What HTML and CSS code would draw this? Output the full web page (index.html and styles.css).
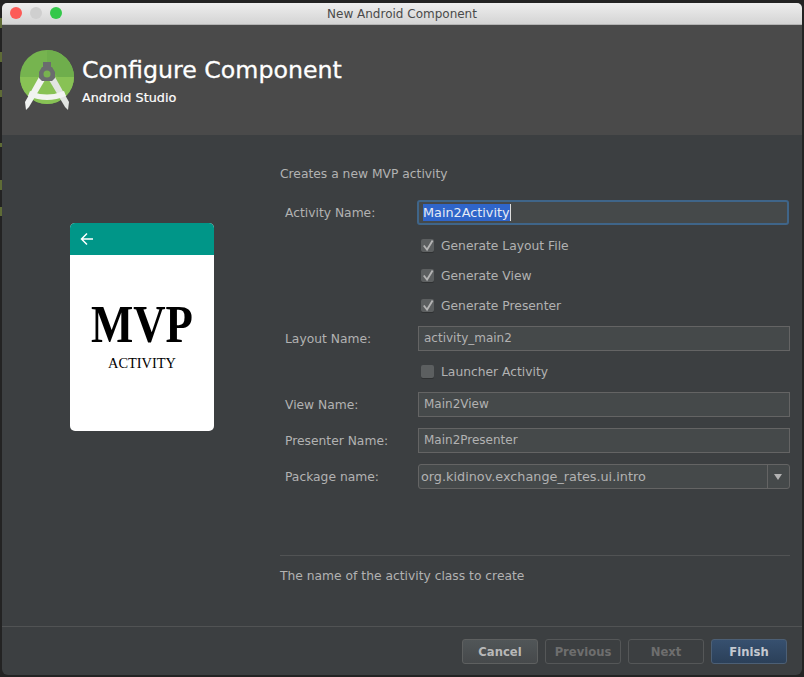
FILE: index.html
```html
<!DOCTYPE html>
<html>
<head>
  <title>New Android Component</title>
  <link rel="stylesheet" href="styles.css">
</head>
<body>
  <div class="window">
    <div class="titlebar">
      <div class="lights">
        <span class="light red"></span>
        <span class="light gray"></span>
        <span class="light green"></span>
      </div>
      <div class="window-title">New Android Component</div>
    </div>

    <div class="header">
      <svg class="logo" width="60" height="64" viewBox="0 0 60 64">
        <circle cx="29" cy="27" r="27" fill="#76b44f"/>
        <path d="M2 27a27 27 0 0 0 54 0z" fill="#88c255"/>
        <path d="M29 0a27 27 0 0 1 27 27H40L29 14z" fill="#6fae4c"/>
        <path d="M21 27l6 3-16 27-3 3-1-8z" fill="#f1f3f1"/>
        <path d="M37 27l-6 3 16 27 3 3 1-8z" fill="#e2e5e2"/>
        <path d="M12 41q17 7 34 0l2 5q-19 8-38 0z" fill="#f1f3f1"/>
        <path d="M25 12h8v5h1l3 5v6l-3 3h-10l-3-3v-6l3-5h1z" fill="#6a6c6e"/>
        <circle cx="29" cy="24" r="3.500" fill="#78b24f"/>
      </svg>
      <div class="header-text">
        <h1>Configure Component</h1>
        <div class="subtitle">Android Studio</div>
      </div>
    </div>

    <div class="content">
      <div class="preview">
        <div class="card">
          <div class="card-bar">
            <svg width="14" height="14" viewBox="0 0 14 14">
              <path d="M13 7H2M7 1.500 1.500 7 7 12.500" fill="none" stroke="#fff" stroke-width="1.500"/>
            </svg>
          </div>
          <div class="card-body">
            <div class="card-big">MVP</div>
            <div class="card-small">ACTIVITY</div>
          </div>
        </div>
      </div>

      <div class="main">
        <p class="intro">Creates a new MVP activity</p>

        <div class="form">
          <label class="label">Activity Name:</label>
          <div class="field focused"><span class="selected">Main2Activity</span></div>

          <div class="check"><span class="box"><svg width="14" height="14" viewBox="0 0 14 14"><path d="M3 6.500 6.500 11 12.500 1" fill="none" stroke="#b4b4b4" stroke-width="2"/></svg></span>Generate Layout File</div>
          <div class="check"><span class="box"><svg width="14" height="14" viewBox="0 0 14 14"><path d="M3 6.500 6.500 11 12.500 1" fill="none" stroke="#b4b4b4" stroke-width="2"/></svg></span>Generate View</div>
          <div class="check"><span class="box"><svg width="14" height="14" viewBox="0 0 14 14"><path d="M3 6.500 6.500 11 12.500 1" fill="none" stroke="#b4b4b4" stroke-width="2"/></svg></span>Generate Presenter</div>

          <label class="label">Layout Name:</label>
          <div class="field">activity_main2</div>

          <div class="check"><span class="box"></span>Launcher Activity</div>

          <label class="label">View Name:</label>
          <div class="field">Main2View</div>

          <label class="label">Presenter Name:</label>
          <div class="field">Main2Presenter</div>

          <label class="label">Package name:</label>
          <div class="combo">
            <span class="combo-text">org.kidinov.exchange_rates.ui.intro</span>
            <span class="combo-arrow"></span>
          </div>
        </div>

        <div class="help">The name of the activity class to create</div>
      </div>
    </div>

    <div class="footer">
      <button class="btn cancel">Cancel</button>
      <button class="btn off">Previous</button>
      <button class="btn off">Next</button>
      <button class="btn finish">Finish</button>
    </div>
  </div>
</body>
</html>
```

FILE: styles.css
```css
html, body {
  margin: 0;
  padding: 0;
  height: 677px;
  overflow: hidden;
  font-family: "DejaVu Sans", sans-serif;
  font-size: 12.3px;
  color: #b2b2b2;
}

/* editor behind the dialog: only the olive code marks show on the left edge */
body {
  background-color: #232323;
  background-image:
    linear-gradient(#5f6c36, #5f6c36),
    linear-gradient(#5f6c36, #5f6c36),
    linear-gradient(#5f6c36, #5f6c36),
    linear-gradient(#5f6c36, #5f6c36),
    linear-gradient(#5f6c36, #5f6c36),
    linear-gradient(#5f6c36, #5f6c36);
  background-repeat: no-repeat;
  background-position: 0 18px, 0 52px, 0 90px, 0 143px, 0 180px, 0 207px;
  background-size: 2px 10px, 2px 10px, 2px 7px, 2px 4px, 2px 10px, 2px 9px;
}

.window {
  margin: 3px 2px 0 2px;
  width: 800px;
  height: 672px;
  display: flex;
  flex-direction: column;
  background-color: #3c3f41;
  border-radius: 5px 5px 6px 6px;
  overflow: hidden;
}

.titlebar {
  position: relative;
  height: 21px;
  flex: none;
  display: flex;
  align-items: center;
  justify-content: center;
  background: linear-gradient(#eeeeee, #d4d4d4);
  border-bottom: 1px solid #b4b4b4;
}

.lights {
  position: absolute;
  left: 8px;
  top: 4px;
  display: flex;
  gap: 8px;
}

.light {
  width: 12px;
  height: 12px;
  border-radius: 50%;
}

.red { background-color: #fc5b57; }
.gray { background-color: #cfcfcf; }
.green { background-color: #34c84a; }

.window-title {
  font-size: 12px;
  color: #4a4a4a;
}

.header {
  height: 110px;
  flex: none;
  display: flex;
  background-color: #4a4a4a;
  padding-left: 16px;
  box-sizing: border-box;
}

.logo {
  margin-top: 25px;
}

.header-text {
  margin-left: 4px;
  color: #ffffff;
}

.header-text h1 {
  margin: 28px 0 0 0;
  font-size: 23.7px;
  font-weight: normal;
  line-height: 34px;
  -webkit-text-stroke: 0.3px #ffffff;
}

.subtitle {
  font-size: 12.8px;
  line-height: 18px;
  margin-top: 2px;
  -webkit-text-stroke: 0.2px #ffffff;
}

.content {
  flex: 1;
  display: flex;
  min-height: 0;
}

.preview {
  width: 278px;
  flex: none;
  padding: 88px 0 0 68px;
  box-sizing: border-box;
}

.card {
  width: 144px;
  height: 208px;
  background-color: #ffffff;
  border-radius: 5px;
  overflow: hidden;
}

.card-bar {
  height: 32px;
  background-color: #009688;
  display: flex;
  align-items: center;
  padding-left: 10px;
}

.card-big {
  margin-top: 41px;
  text-align: center;
  font-family: "Liberation Serif", serif;
  font-weight: bold;
  font-size: 53px;
  line-height: 56px;
  color: #000000;
  transform: scaleX(0.845);
}

.card-small {
  margin-top: 2px;
  text-align: center;
  font-family: "Liberation Serif", serif;
  font-size: 14.4px;
  line-height: 18px;
  color: #000000;
}

.main {
  width: 510px;
  flex: none;
  display: flex;
  flex-direction: column;
}

.intro {
  margin: 31px 0 0 0;
  line-height: 16px;
}

.form {
  margin-top: 18px;
  display: grid;
  grid-template-columns: 138px 372px;
  row-gap: 11px;
  align-items: center;
}

.label {
  padding-left: 5px;
}

.field {
  height: 25px;
  line-height: 23px;
  box-sizing: border-box;
  padding-left: 5px;
  background-color: #45494a;
  border: 1px solid #646464;
  font-size: 12px;
}

.field.focused {
  border: 2px solid #3f6589;
  border-radius: 3px;
  line-height: 21px;
  padding-left: 4px;
  margin-left: -1px;
  margin-right: 1px;
  font-size: 12.8px;
}

.selected {
  display: inline-block;
  background-color: #2f65ca;
  color: #e6ebf5;
  border-right: 1px solid #dddddd;
  line-height: 17px;
}

.check {
  grid-column: 2;
  display: flex;
  align-items: center;
  height: 19px;
  margin-left: 3px;
}

.box {
  width: 13px;
  height: 13px;
  margin-right: 7px;
  background-color: #5c5f60;
  border-radius: 2px;
  box-shadow: 0 1px 0 #2f3132;
  display: flex;
  align-items: center;
  justify-content: center;
}

.combo {
  height: 25px;
  display: flex;
  align-items: center;
  box-sizing: border-box;
  background-color: #45494a;
  border: 1px solid #646464;
  border-radius: 3px;
  font-size: 12.8px;
}

.combo-text {
  flex: 1;
  padding-left: 2px;
}

.combo-arrow {
  width: 21px;
  height: 23px;
  border-left: 1px solid #646464;
  position: relative;
}

.combo-arrow::after {
  content: "";
  position: absolute;
  left: 6px;
  top: 9px;
  border-left: 4px solid transparent;
  border-right: 4px solid transparent;
  border-top: 6px solid #b2b2b2;
}

.help {
  margin-top: 66px;
  border-top: 1px solid #515354;
  padding-top: 12px;
  line-height: 16px;
}

.footer {
  height: 49px;
  flex: none;
  border-top: 1px solid #515354;
  display: flex;
  justify-content: flex-end;
  gap: 7px;
  padding: 12px 15px 0 0;
  box-sizing: border-box;
}

.btn {
  width: 76px;
  height: 25px;
  box-sizing: border-box;
  border: 1px solid #5e6060;
  border-radius: 3px;
  background: none;
  font-family: "DejaVu Sans", sans-serif;
  font-size: 11.6px;
  font-weight: bold;
  padding: 0;
}

.cancel {
  background: linear-gradient(#515658, #46494b);
  color: #b8b8b8;
}

.off {
  color: #6e6e6e;
  border-color: #555758;
}

.finish {
  background: linear-gradient(#37506f, #2b4059);
  border-color: #4c5f75;
  color: #c4c9d0;
}
```
